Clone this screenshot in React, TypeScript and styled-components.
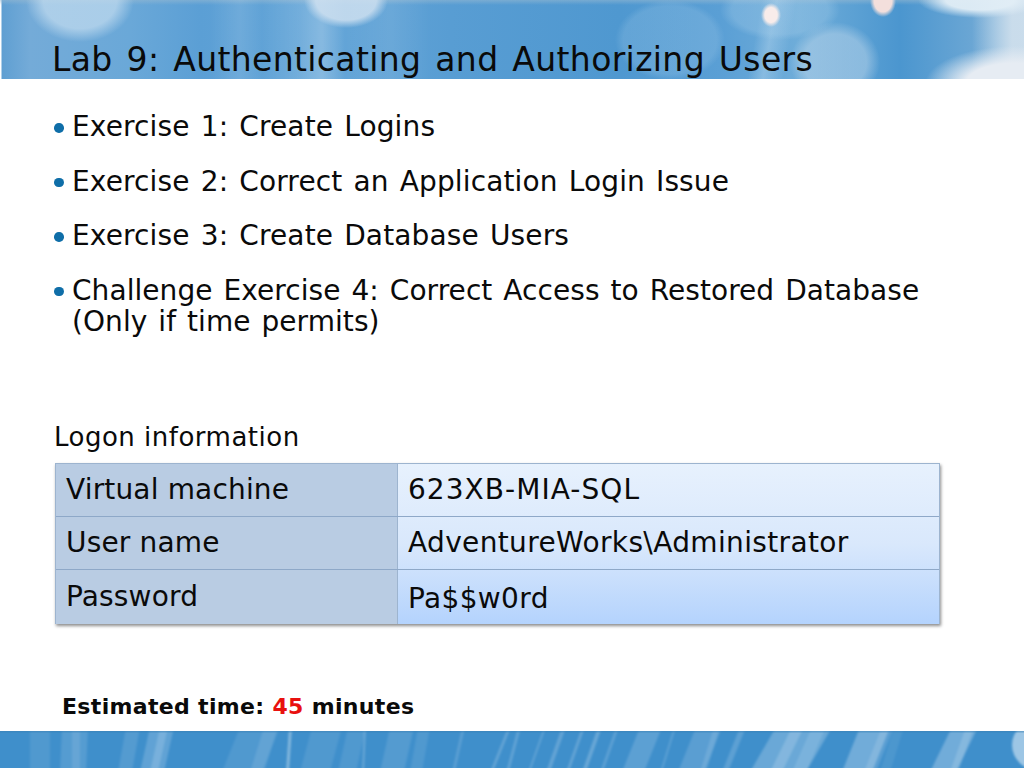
import React from 'react';
import styled, { createGlobalStyle } from 'styled-components';

const exercises = [
  { text: 'Exercise 1: Create Logins', tracking: 0.14 },
  { text: 'Exercise 2: Correct an Application Login Issue', tracking: 0.14 },
  { text: 'Exercise 3: Create Database Users', tracking: 0.14 },
  { text: 'Challenge Exercise 4: Correct Access to Restored Database (Only if time permits)', tracking: 0.06 },
];

const logon = [
  { label: 'Virtual machine', value: '623XB-MIA-SQL', tracking: 1.05 },
  { label: 'User name', value: 'AdventureWorks\\Administrator', tracking: 0.36 },
  { label: 'Password', value: 'Pa$$w0rd', tracking: 0.36 },
];

// streaks in the footer picture: x at the bottom, width, opacity, slant
const streaks = [
  [30, 20, 0.1, 0], [60, 26, 0.13, 2], [72, 8, 0.12, 0], [118, 14, 0.12, 8], [140, 24, 0.2, 10], [150, 8, 0.18, 10],
  [222, 40, 0.1, 18], [250, 14, 0.12, 14], [286, 3, 0.4, 3], [300, 30, 0.1, 12], [338, 18, 0.1, 10], [362, 2, 0.25, 2],
  [380, 24, 0.12, 10], [410, 12, 0.1, 8], [452, 3, 0.16, 10], [490, 3, 0.22, 18], [506, 3, 0.2, 12],
  [528, 2, 0.2, 16], [546, 4, 0.22, 16], [566, 3, 0.22, 16], [582, 4, 0.25, 16], [600, 3, 0.18, 16], [622, 22, 0.18, 18],
  [660, 2, 0.18, 14], [678, 26, 0.16, 18], [700, 6, 0.14, 14], [722, 6, 0.18, 18], [750, 56, 0.26, 26],
  [770, 12, 0.2, 22], [792, 14, 0.14, 20], [842, 30, 0.3, 18], [864, 12, 0.16, 18], [880, 10, 0.08, 14],
  [930, 26, 0.3, 22], [950, 8, 0.18, 16],
];

const App = () => (
  <Page>
    <GlobalStyle />
    <Header>
      <Title>Lab 9: Authenticating and Authorizing Users</Title>
    </Header>
    <Content>
      <Bullets>
        {exercises.map((item) => (
          <Bullet key={item.text} $tracking={item.tracking}>
            {item.text}
          </Bullet>
        ))}
      </Bullets>
      <TableCaption>Logon information</TableCaption>
      <LogonTable>
        {logon.map((row, index) => (
          <Row key={row.label} $last={index === logon.length - 1}>
            <LabelCell $last={index === logon.length - 1}>{row.label}</LabelCell>
            <ValueCell $last={index === logon.length - 1} $tracking={row.tracking}>
              {row.value}
            </ValueCell>
          </Row>
        ))}
      </LogonTable>
      <Estimate>
        Estimated time: <Minutes>45</Minutes> minutes
      </Estimate>
    </Content>
    <Footer>
      <FooterArt viewBox="0 0 1024 37" preserveAspectRatio="none" aria-hidden="true">
        <defs>
          <filter id="soft" x="-20%" y="-20%" width="140%" height="140%">
            <feGaussianBlur stdDeviation="0.8" />
          </filter>
        </defs>
        <g filter="url(#soft)">
          {streaks.map(([x, w, o, s]) => (
            <polygon
              key={x}
              points={`${x + s},-4 ${x + s + w},-4 ${x + w},41 ${x},41`}
              fill="#e4eff8"
              opacity={o}
            />
          ))}
          <ellipse cx="1040" cy="14" rx="28" ry="26" fill="#dcebf7" opacity="0.6" />
        </g>
        <rect width="1024" height="1.5" fill="#3a7fb4" opacity="0.5" />
      </FooterArt>
    </Footer>
  </Page>
);

const GlobalStyle = createGlobalStyle`
  html, body {
    margin: 0;
    padding: 0;
    background: #ffffff;
  }
`;

const Page = styled.div`
  display: flex;
  flex-direction: column;
  width: 1024px;
  height: 768px;
  overflow: hidden;
  font-family: "DejaVu Sans", Verdana, sans-serif;
  color: #0a0a0a;
`;

const Header = styled.header`
  flex: none;
  height: 79px;
  box-sizing: border-box;
  padding: 40px 0 0 52px;
  background:
    radial-gradient(ellipse 10px 12px at 771px 15px, #f8ecea 0 62%, rgba(248, 236, 234, 0) 100%),
    radial-gradient(ellipse 13px 16px at 883px 1px, #f3dfdc 0 68%, rgba(243, 223, 220, 0) 100%),
    radial-gradient(ellipse 62px 18px at 980px 0, rgba(226, 238, 246, 0.95) 0 55%, rgba(226, 238, 246, 0) 100%),
    radial-gradient(ellipse 90px 38px at 1015px 84px, rgba(230, 236, 243, 1) 0 55%, rgba(230, 236, 243, 0) 100%),
    linear-gradient(90deg, rgba(205, 222, 236, 0) 972px, rgba(205, 222, 236, 0.95) 1012px),
    radial-gradient(ellipse 42px 28px at 346px 0, rgba(206, 224, 240, 0.85) 0 72%, rgba(206, 224, 240, 0) 100%),
    radial-gradient(ellipse 54px 42px at 80px 0, rgba(196, 221, 240, 0.7) 0 68%, rgba(196, 221, 240, 0) 100%),
    radial-gradient(ellipse 55px 40px at 670px 40px, rgba(170, 208, 235, 0.22) 0 85%, rgba(170, 208, 235, 0) 100%),
    radial-gradient(ellipse 45px 40px at 835px 62px, rgba(190, 215, 235, 0.5) 0 70%, rgba(190, 215, 235, 0) 100%),
    radial-gradient(ellipse 60px 30px at 780px 10px, rgba(170, 208, 235, 0.3) 0 80%, rgba(170, 208, 235, 0) 100%),
    linear-gradient(100deg, rgba(200, 225, 243, 0) 750px, rgba(200, 225, 243, 0.35) 765px, rgba(200, 225, 243, 0) 785px),
    linear-gradient(90deg, rgba(255, 255, 255, 0) 210px, rgba(255, 255, 255, 0.1) 240px, rgba(255, 255, 255, 0) 262px, rgba(255, 255, 255, 0.1) 300px, rgba(255, 255, 255, 0.22) 322px, rgba(255, 255, 255, 0) 345px, rgba(255, 255, 255, 0.08) 390px, rgba(255, 255, 255, 0) 430px),
    linear-gradient(180deg, rgba(150, 185, 210, 0.55) 0, rgba(130, 175, 210, 0) 5px),
    linear-gradient(90deg, #fff 0, #fff 1px, #5f9fd2 2px, #74abd8 30px, #6aa8d8 130px, #5b9fd5 200px, #65a6d8 320px, #589dd3 450px, #4f98d0 620px, #5a9fd5 720px, #6fadd9 800px, #4b96cf 900px, #70a9d5 985px, #8dbde0 1024px);
`;

const Title = styled.h1`
  margin: 0;
  font-size: 33px;
  line-height: 40px;
  letter-spacing: 0.36px;
  word-spacing: 3.07px;
  font-weight: normal;
  white-space: nowrap;
`;

const Content = styled.main`
  flex: 1;
  display: flex;
  flex-direction: column;
  min-height: 0;
`;

const Bullets = styled.ul`
  list-style: none;
  margin: 32px 0 0;
  padding: 0 90px 0 72px;
  height: 311px;
`;

const Bullet = styled.li<{ $tracking: number }>`
  position: relative;
  font-size: 28px;
  line-height: 31px;
  letter-spacing: ${(props) => props.$tracking}px;
  word-spacing: 2px;
  margin-bottom: 23.6px;

  &::before {
    content: '';
    position: absolute;
    left: -18px;
    top: 12px;
    width: 9.5px;
    height: 9.5px;
    border-radius: 50%;
    background: #0f6ea8;
  }
`;

const TableCaption = styled.div`
  margin: 0 0 11px 54px;
  font-size: 26px;
  line-height: 30px;
  letter-spacing: 0.5px;
`;

const LogonTable = styled.div`
  width: 885px;
  margin-left: 55px;
  box-sizing: border-box;
  background: linear-gradient(180deg, #e7f1fd 0, #d9e8fc 50%, #b4d3fd 100%);
  border: 1px solid #9db4cf;
  border-bottom: none;
  box-shadow: 1px 2px 3px rgba(0, 0, 0, 0.45);
`;

const Row = styled.div<{ $last: boolean }>`
  display: grid;
  grid-template-columns: 341px 1fr;
  height: ${(props) => (props.$last ? '54px' : '53px')};
  box-sizing: border-box;
  border-bottom: ${(props) => (props.$last ? 'none' : '1px solid #8ea8c8')};
  font-size: 28px;
`;

const LabelCell = styled.div<{ $last: boolean }>`
  display: flex;
  align-items: center;
  padding: 0 0 1px 10px;
  background: #b9cce3;
  letter-spacing: 0.16px;
`;

const ValueCell = styled.div<{ $last: boolean; $tracking: number }>`
  display: flex;
  align-items: center;
  padding: ${(props) => (props.$last ? '3px 0 0 10px' : '0 0 1px 10px')};
  border-left: 1px solid #9db4cf;
  letter-spacing: ${(props) => props.$tracking}px;
`;

const Estimate = styled.div`
  margin: 68px 0 0 62px;
  font-size: 22px;
  line-height: 30px;
  letter-spacing: 0.33px;
  font-weight: bold;
  white-space: nowrap;
`;

const Minutes = styled.span`
  color: #e8110f;
`;

const Footer = styled.footer`
  flex: none;
  height: 37px;
  background: #3f8fcb;
`;

const FooterArt = styled.svg`
  display: block;
  width: 100%;
  height: 100%;
`;

export default App;
